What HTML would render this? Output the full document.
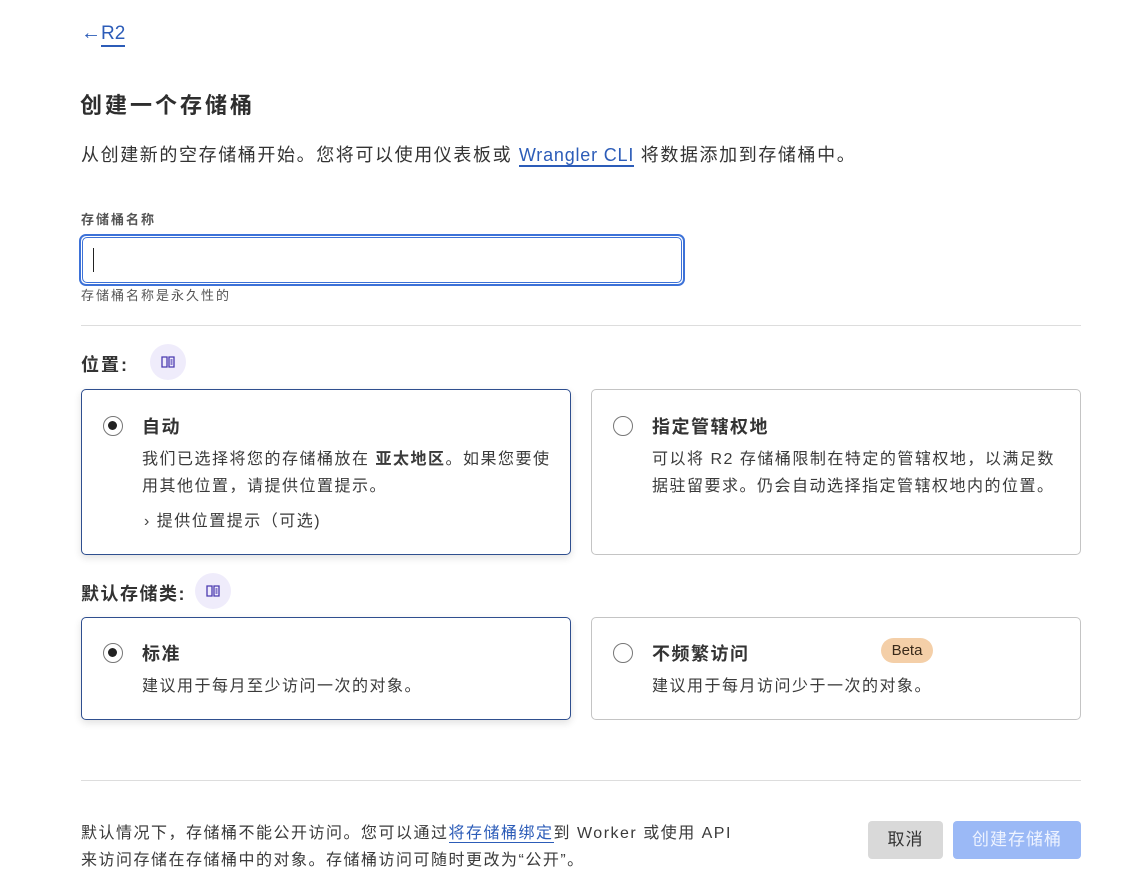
<!DOCTYPE html>
<html><head><meta charset="utf-8"><style>
*{margin:0;padding:0;box-sizing:border-box}
body{width:1130px;height:881px;background:#fff;font-family:"Liberation Sans","Noto Sans CJK SC",sans-serif;color:#333;position:relative;overflow:hidden}
.a{position:absolute;white-space:nowrap}
.blue{color:#2c5cb8}
.card{position:absolute;border:1px solid #c4c4c4;border-radius:5px;background:#fff}
.sel{border-color:#2f4f8f;box-shadow:0 3px 8px rgba(0,0,0,.12)}
.radio{position:absolute;width:20px;height:20px;border:1.5px solid #777;border-radius:50%}
.radio.on::after{content:"";position:absolute;left:4px;top:4px;width:9px;height:9px;border-radius:50%;background:#222}
.t{position:absolute;font-size:18px;font-weight:bold;color:#333;letter-spacing:1.5px}
.b{position:absolute;font-size:16px;line-height:27px;color:#3a3a3a;letter-spacing:1.5px;white-space:nowrap}
.ic{position:absolute;width:36px;height:36px;border-radius:50%;background:#efecfb}
.ic svg{position:absolute;left:11px;top:12px}
hr{position:absolute;border:0;border-top:1px solid #ddd;left:81px;width:1000px}
</style></head><body>
<div class="a blue" style="left:81px;top:22px;font-size:19px;"><span style="font-size:20px">←</span><span style="border-bottom:2px solid #2c5cb8;padding-bottom:1px">R2</span></div>
<div class="a" style="left:80px;top:88px;font-size:22px;font-weight:bold;color:#2e2e2e;letter-spacing:3px">创建一个存储桶</div>
<div class="a" style="left:81px;top:141px;font-size:18px;color:#333;letter-spacing:1.6px">从创建新的空存储桶开始。您将可以使用仪表板或 <span class="blue" style="border-bottom:2px solid #2c5cb8;letter-spacing:0.8px">Wrangler CLI</span> 将数据添加到存储桶中。</div>
<div class="a" style="left:81px;top:209px;font-size:13px;font-weight:bold;color:#555;letter-spacing:2px">存储桶名称</div>
<div class="a" style="left:79px;top:234px;width:606px;height:52px;border:2px solid #3d72d8;border-radius:7px;padding:1px"><div style="width:100%;height:100%;border:1px solid #3d72d8;border-radius:5px;position:relative"><div style="position:absolute;left:10px;top:10px;width:1px;height:24px;background:#222"></div></div></div>
<div class="a" style="left:81px;top:285px;font-size:13px;color:#555;letter-spacing:2px">存储桶名称是永久性的</div>
<hr style="top:325px">
<div class="a" style="left:81px;top:351px;font-size:18px;font-weight:bold;color:#333;letter-spacing:2px">位置:</div>
<div class="ic" style="left:150px;top:344px"><svg width="14" height="12" viewBox="0 0 14 12" fill="none" stroke="#4b3bb0" stroke-width="1.3"><path d="M1 1h5v10H1zM8 1h5v10H8zM9.5 4h2M9.5 6h2M9.5 8h2"/></svg></div>
<div class="card sel" style="left:81px;top:389px;width:490px;height:166px">
<div class="radio on" style="left:21px;top:26px"></div>
<div class="t" style="left:60px;top:23px">自动</div>
<div class="b" style="left:60px;top:56px">我们已选择将您的存储桶放在 <b>亚太地区</b>。如果您要使<br>用其他位置，请提供位置提示。</div>
<div class="b blue" style="left:62px;top:118px"><span style="color:#444">›</span> 提供位置提示（可选)</div>
</div>
<div class="card" style="left:591px;top:389px;width:490px;height:166px">
<div class="radio" style="left:21px;top:26px"></div>
<div class="t" style="left:60px;top:23px">指定管辖权地</div>
<div class="b" style="left:60px;top:56px">可以将 R2 存储桶限制在特定的管辖权地，以满足数<br>据驻留要求。仍会自动选择指定管辖权地内的位置。</div>
</div>
<div class="a" style="left:81px;top:580px;font-size:18px;font-weight:bold;color:#333;letter-spacing:1.5px">默认存储类:</div>
<div class="ic" style="left:195px;top:573px"><svg width="14" height="12" viewBox="0 0 14 12" fill="none" stroke="#4b3bb0" stroke-width="1.3"><path d="M1 1h5v10H1zM8 1h5v10H8zM9.5 4h2M9.5 6h2M9.5 8h2"/></svg></div>
<div class="card sel" style="left:81px;top:617px;width:490px;height:103px">
<div class="radio on" style="left:21px;top:25px"></div>
<div class="t" style="left:60px;top:22px">标准</div>
<div class="b" style="left:60px;top:55px">建议用于每月至少访问一次的对象。</div>
</div>
<div class="card" style="left:591px;top:617px;width:490px;height:103px">
<div class="radio" style="left:21px;top:25px"></div>
<div class="t" style="left:60px;top:22px">不频繁访问</div>
<div class="a" style="left:289px;top:20px;width:52px;height:25px;border-radius:13px;background:#f4cfa8;font-size:15px;line-height:25px;text-align:center;color:#3a2a1a">Beta</div>
<div class="b" style="left:60px;top:55px">建议用于每月访问少于一次的对象。</div>
</div>
<hr style="top:780px">
<div class="b" style="left:81px;top:820px">默认情况下，存储桶不能公开访问。您可以通过<span class="blue" style="border-bottom:1px solid #2c5cb8">将存储桶绑定</span>到 Worker 或使用 API<br>来访问存储在存储桶中的对象。存储桶访问可随时更改为“公开”。</div>
<div class="a" style="left:868px;top:821px;width:75px;height:38px;border-radius:4px;background:#d9d9d9;font-size:17px;line-height:38px;text-align:center;color:#333;letter-spacing:1px">取消</div>
<div class="a" style="left:953px;top:821px;width:128px;height:38px;border-radius:4px;background:#9bb9f6;font-size:17px;line-height:38px;text-align:center;color:#eef3ff;letter-spacing:1px">创建存储桶</div>
</body></html>
